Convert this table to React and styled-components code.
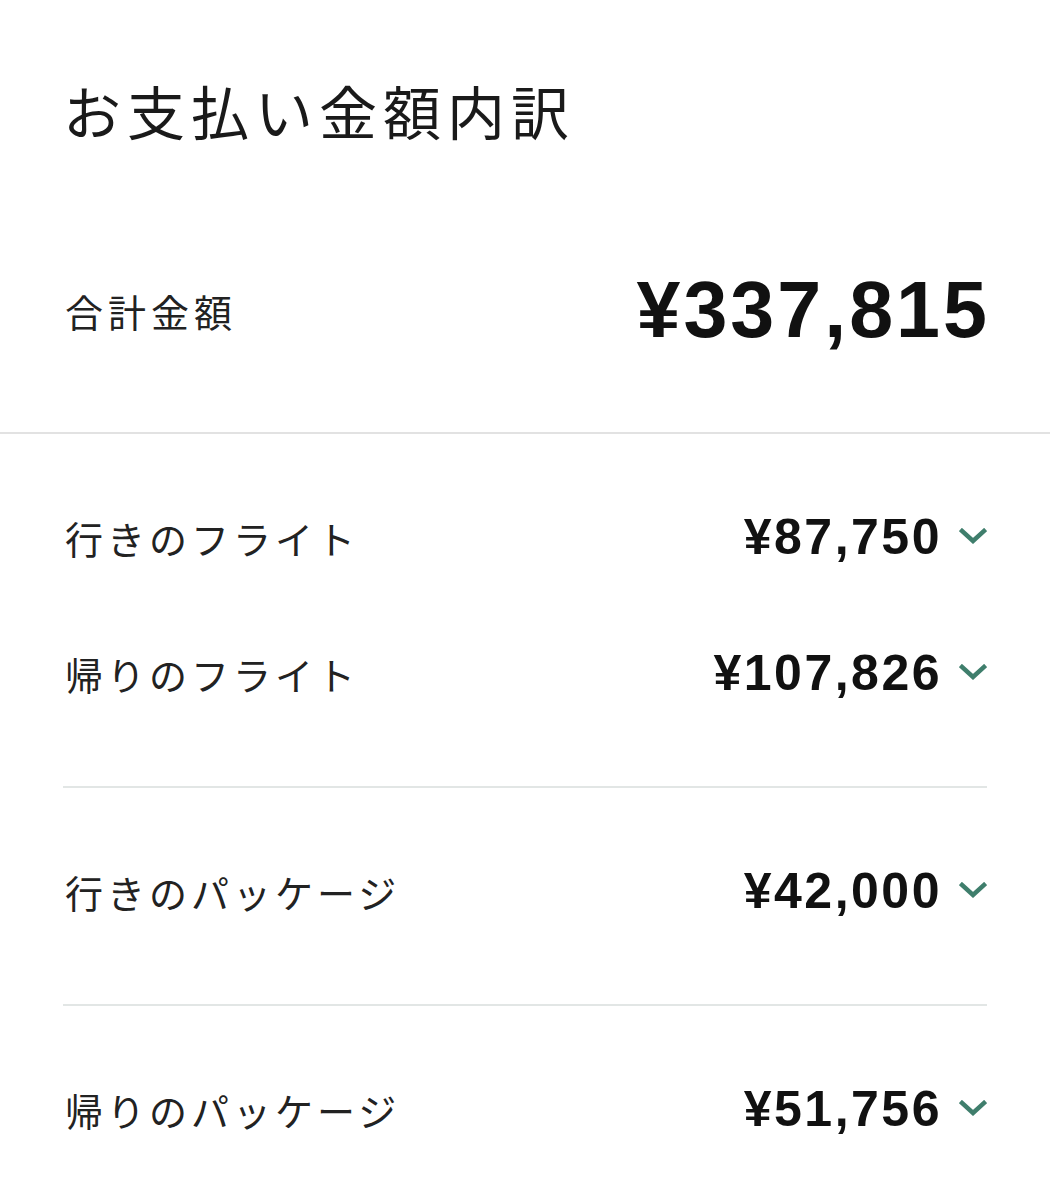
import React from "react";
import styled, { createGlobalStyle } from "styled-components";

const GlobalStyle = createGlobalStyle`
  body {
    margin: 0;
    background: #ffffff;
    font-family: "Noto Sans CJK JP", "Noto Sans", sans-serif;
    color: #1e1e1e;
  }
`;

const items = [
  [
    { label: "行きのフライト", amount: "¥87,750" },
    { label: "帰りのフライト", amount: "¥107,826" },
  ],
  [{ label: "行きのパッケージ", amount: "¥42,000" }],
  [{ label: "帰りのパッケージ", amount: "¥51,756" }],
];

function Chevron() {
  return (
    <ChevronIcon viewBox="0 0 28 16" aria-hidden="true">
      <polyline
        points="3,3 14,13 25,3"
        fill="none"
        stroke="#3f7e6c"
        strokeWidth="4.5"
        strokeLinecap="square"
        strokeLinejoin="miter"
      />
    </ChevronIcon>
  );
}

function App() {
  return (
    <Page>
      <GlobalStyle />
      <Title>お支払い金額内訳</Title>
      <TotalRow>
        <TotalLabel>合計金額</TotalLabel>
        <TotalAmount>¥337,815</TotalAmount>
      </TotalRow>
      <FullDivider />
      {items.map((group, gi) => (
        <React.Fragment key={gi}>
          {gi > 0 && <InsetDivider />}
          <Group>
            {group.map((row) => (
              <Row key={row.label}>
                <RowLabel>{row.label}</RowLabel>
                <RowRight>
                  <RowAmount>{row.amount}</RowAmount>
                  <Chevron />
                </RowRight>
              </Row>
            ))}
          </Group>
        </React.Fragment>
      ))}
    </Page>
  );
}

const Page = styled.div`
  width: 1050px;
  min-height: 1200px;
  background: #ffffff;
`;

const Title = styled.h1`
  margin: 0;
  padding: 75px 63px 0;
  font-size: 58px;
  line-height: 70px;
  font-weight: 400;
  letter-spacing: 6px;
  color: #1a1a1a;
`;

const TotalRow = styled.div`
  display: flex;
  align-items: center;
  justify-content: space-between;
  height: 90px;
  margin-top: 120px;
  padding: 0 63px 77px 65px;
`;

const TotalLabel = styled.span`
  font-size: 38px;
  letter-spacing: 5px;
  color: #222;
`;

const TotalAmount = styled.span`
  font-family: "Liberation Sans", Arial, sans-serif;
  font-weight: 700;
  font-size: 79px;
  letter-spacing: 3px;
  color: #111;
  margin-right: -3px;
`;

const FullDivider = styled.div`
  height: 2px;
  background: #e2e2e2;
`;

const InsetDivider = styled.div`
  height: 2px;
  margin: 0 63px;
  background: #e2e6e5;
`;

const Group = styled.div`
  display: flex;
  flex-direction: column;
  gap: 64px;
  padding: 67px 63px 77px 65px;
`;

const Row = styled.div`
  display: flex;
  align-items: center;
  justify-content: space-between;
  height: 72px;
`;

const RowLabel = styled.span`
  font-size: 38px;
  letter-spacing: 4px;
  color: #222;
`;

const RowRight = styled.div`
  display: flex;
  align-items: center;
  gap: 17px;
`;

const RowAmount = styled.span`
  font-family: "Liberation Sans", Arial, sans-serif;
  font-weight: 700;
  font-size: 50px;
  letter-spacing: 2.5px;
  color: #111;
`;

const ChevronIcon = styled.svg`
  width: 28px;
  height: 16px;
  margin-top: -2px;
`;

export default App;
